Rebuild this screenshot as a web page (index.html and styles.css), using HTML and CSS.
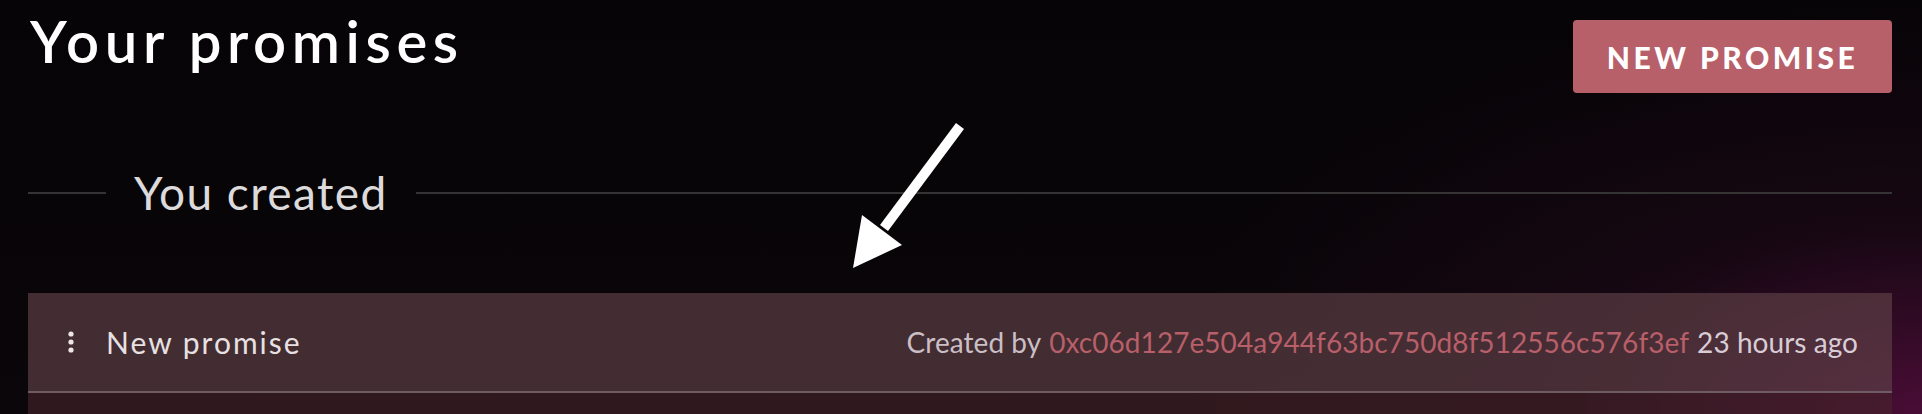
FILE: index.html
```html
<!DOCTYPE html>
<html lang="en">
<head>
<meta charset="utf-8">
<title>Your promises</title>
<link rel="stylesheet" href="styles.css">
</head>
<body>
<div class="page">
  <header class="header">
    <h1 class="title">Your promises</h1>
    <button class="btn-new" type="button">NEW PROMISE</button>
  </header>

  <div class="divider">
    <span class="divider-line divider-line--short"></span>
    <h2 class="divider-text">You created</h2>
    <span class="divider-line divider-line--long"></span>
  </div>

  <section class="panel">
    <div class="row">
      <div class="row-left">
        <svg class="dots" width="6" height="22" viewBox="0 0 6 22" aria-hidden="true">
          <circle cx="3" cy="3" r="2.6" fill="#ece6e8"/>
          <circle cx="3" cy="11" r="2.6" fill="#ece6e8"/>
          <circle cx="3" cy="19" r="2.6" fill="#ece6e8"/>
        </svg>
        <span class="row-name">New promise</span>
      </div>
      <div class="row-meta">
        <span class="meta-muted">Created by</span>
        <span class="meta-addr">0xc06d127e504a944f63bc750d8f512556c576f3ef</span>
        <span class="meta-time">23 hours ago</span>
      </div>
    </div>
    <div class="panel-body"></div>
  </section>

  <svg class="arrow" width="130" height="160" viewBox="0 0 130 160" aria-hidden="true">
    <line x1="120" y1="11" x2="44" y2="113" stroke="#ffffff" stroke-width="10"/>
    <polygon points="13,153 22,100 62,130" fill="#ffffff"/>
  </svg>
</div>
</body>
</html>
```

FILE: styles.css
```css
html, body {
  margin: 0;
  padding: 0;
  height: 100%;
  overflow: hidden;
}

body {
  background-color: #060406;
  background-image:
    radial-gradient(ellipse 760px 420px at 100% 100%, rgba(82, 14, 60, 0.88) 0%, rgba(40, 10, 32, 0.45) 45%, rgba(6, 4, 6, 0) 100%),
    linear-gradient(180deg, #060406 0%, #0a0609 100%);
  font-family: "Lato", "Liberation Sans", sans-serif;
  color: #ffffff;
}

.page {
  position: relative;
  padding: 12px 30px 0 28px;
}

.header {
  display: flex;
  justify-content: space-between;
  align-items: flex-start;
}

.title {
  margin: 0;
  padding-left: 2px;
  font-size: 58px;
  line-height: 57px;
  font-weight: 600;
  letter-spacing: 5.6px;
  color: #ffffff;
}

.btn-new {
  margin-top: 8px;
  height: 73px;
  width: 319px;
  padding: 0;
  border: 0;
  border-radius: 4px;
  background: #b8606a;
  color: #ffffff;
  font-family: "Lato", "Liberation Sans", sans-serif;
  font-size: 30px;
  font-weight: 900;
  letter-spacing: 3.5px;
  display: flex;
  align-items: center;
  justify-content: center;
}

.divider {
  margin-top: 77px;
  display: flex;
  align-items: center;
  gap: 28px;
}

.divider-line {
  height: 2px;
  background: #363334;
}

.divider-line--short {
  width: 78px;
  flex: none;
}

.divider-line--long {
  flex: 1;
}

.divider-text {
  margin: 0;
  font-size: 46px;
  line-height: 46px;
  font-weight: 400;
  letter-spacing: 1.4px;
  color: #dcdadb;
}

.panel {
  margin-top: 77px;
  background: rgba(70, 36, 43, 0.64);
}

.row {
  height: 98px;
  border-bottom: 2px solid #6e5c62;
  background: rgba(255, 255, 255, 0.09);
  display: flex;
  align-items: center;
  justify-content: space-between;
  padding: 0 34px 0 40px;
}

.row-left {
  display: flex;
  align-items: center;
  gap: 32px;
}

.dots {
  display: block;
}

.row-name {
  font-size: 30px;
  font-weight: 400;
  letter-spacing: 2px;
  color: #e8e1e3;
}

.row-meta {
  font-size: 28px;
  font-weight: 400;
  letter-spacing: 0.05px;
  display: flex;
  gap: 8px;
}

.meta-muted {
  color: #cbbfc6;
}

.meta-addr {
  color: #b85f69;
}

.meta-time {
  color: #d8cdd6;
}

.panel-body {
  height: 120px;
}

.arrow {
  position: absolute;
  left: 840px;
  top: 115px;
}
```
